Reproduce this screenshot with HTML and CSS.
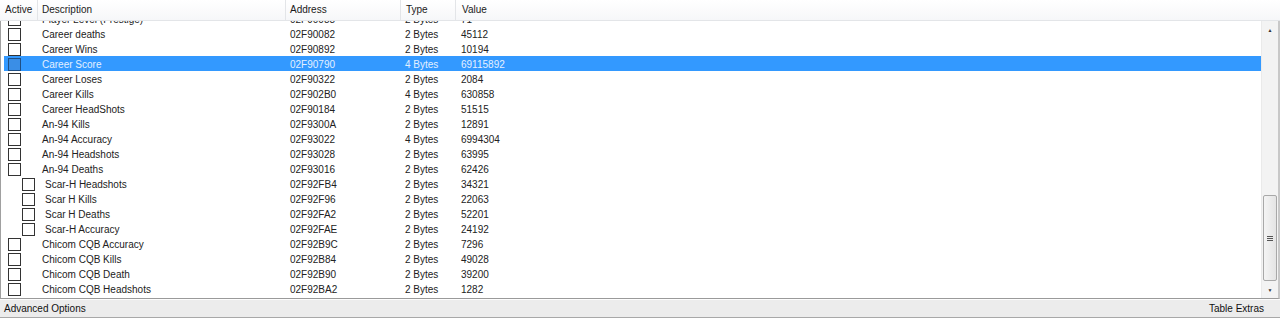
FILE: index.html
```html
<!DOCTYPE html>
<html lang="en">
<head>
    <meta charset="UTF-8">
    <title>Cheat Table</title>
    <link rel="stylesheet" href="styles.css">
</head>
<body>
    <div class="table-header">
        <div class="col col-active">Active</div>
        <div class="col col-desc">Description</div>
        <div class="col col-addr">Address</div>
        <div class="col col-type">Type</div>
        <div class="col col-value">Value</div>
    </div>

    <div class="list-frame">
        <div class="list">
            <div class="row partial"><span class="check"></span><span>Player Level (Prestige)</span><span>02F90088</span><span>2 Bytes</span><span>71</span></div>
            <div class="row"><span class="check"></span><span>Career deaths</span><span>02F90082</span><span>2 Bytes</span><span>45112</span></div>
            <div class="row"><span class="check"></span><span>Career Wins</span><span>02F90892</span><span>2 Bytes</span><span>10194</span></div>
            <div class="row selected"><span class="check"></span><span>Career Score</span><span>02F90790</span><span>4 Bytes</span><span>69115892</span></div>
            <div class="row"><span class="check"></span><span>Career Loses</span><span>02F90322</span><span>2 Bytes</span><span>2084</span></div>
            <div class="row"><span class="check"></span><span>Career Kills</span><span>02F902B0</span><span>4 Bytes</span><span>630858</span></div>
            <div class="row"><span class="check"></span><span>Career HeadShots</span><span>02F90184</span><span>2 Bytes</span><span>51515</span></div>
            <div class="row"><span class="check"></span><span>An-94 Kills</span><span>02F9300A</span><span>2 Bytes</span><span>12891</span></div>
            <div class="row"><span class="check"></span><span>An-94 Accuracy</span><span>02F93022</span><span>4 Bytes</span><span>6994304</span></div>
            <div class="row"><span class="check"></span><span>An-94 Headshots</span><span>02F93028</span><span>2 Bytes</span><span>63995</span></div>
            <div class="row"><span class="check"></span><span>An-94 Deaths</span><span>02F93016</span><span>2 Bytes</span><span>62426</span></div>
            <div class="row child"><span class="check"></span><span>Scar-H Headshots</span><span>02F92FB4</span><span>2 Bytes</span><span>34321</span></div>
            <div class="row child"><span class="check"></span><span>Scar H Kills</span><span>02F92F96</span><span>2 Bytes</span><span>22063</span></div>
            <div class="row child"><span class="check"></span><span>Scar H Deaths</span><span>02F92FA2</span><span>2 Bytes</span><span>52201</span></div>
            <div class="row child"><span class="check"></span><span>Scar-H Accuracy</span><span>02F92FAE</span><span>2 Bytes</span><span>24192</span></div>
            <div class="row"><span class="check"></span><span>Chicom CQB Accuracy</span><span>02F92B9C</span><span>2 Bytes</span><span>7296</span></div>
            <div class="row"><span class="check"></span><span>Chicom CQB Kills</span><span>02F92B84</span><span>2 Bytes</span><span>49028</span></div>
            <div class="row"><span class="check"></span><span>Chicom CQB Death</span><span>02F92B90</span><span>2 Bytes</span><span>39200</span></div>
            <div class="row"><span class="check"></span><span>Chicom CQB Headshots</span><span>02F92BA2</span><span>2 Bytes</span><span>1282</span></div>
        </div>

        <div class="scrollbar">
            <div class="arrow up">&#9650;</div>
            <div class="track">
                <div class="thumb"><span class="grip"></span></div>
            </div>
            <div class="arrow down">&#9660;</div>
        </div>
    </div>

    <div class="footer">
        <div class="footer-btn">Advanced Options</div>
        <div class="footer-btn">Table Extras</div>
    </div>
</body>
</html>
```

FILE: styles.css
```css
body {
    margin: 0;
    width: 1280px;
    height: 318px;
    overflow: hidden;
    font-family: "Liberation Sans", Arial, sans-serif;
    font-size: 10px;
    color: #222;
    background: #f0f0f0;
    display: flex;
    flex-direction: column;
}

/* header */
.table-header {
    height: 21px;
    display: flex;
    background: linear-gradient(to bottom, #ffffff, #f6f7f9);
    border-bottom: 1px solid #e3e5e8;
    box-sizing: border-box;
}

.col {
    line-height: 20px;
    padding-left: 4px;
    border-right: 1px solid #e3e5e8;
    box-sizing: border-box;
    color: #1a1a1a;
}

.col-active { width: 38px; padding-left: 5px; }
.col-desc { width: 248px; padding-left: 4px; }
.col-addr { width: 115px; padding-left: 4px; }
.col-type { width: 55px; padding-left: 5px; }
.col-value { flex: 1; padding-left: 6px; border-right: none; }

/* list */
.list-frame {
    height: 278px;
    display: flex;
    background: #fff;
    border-left: 1px solid #a0a0a0;
    border-right: 2px solid #c8c8c8;
    border-bottom: 1px solid #9a9a9a;
    box-sizing: border-box;
}

.list {
    flex: 1;
    overflow: hidden;
    padding-left: 3px;
}

.row {
    height: 15px;
    padding-top: 2px;
    box-sizing: border-box;
    display: grid;
    grid-template-columns: 38px 248px 115px 56px 1fr;
    align-items: center;
    line-height: 13px;
    white-space: nowrap;
}

.row.partial {
    margin-top: -10px;
}

.check {
    width: 11px;
    height: 11px;
    margin-left: 4px;
    border: 1px solid #333;
    background: #fff;
}

.row.child .check {
    margin-left: 18px;
}

.row.child span:nth-child(2) {
    padding-left: 3px;
}

.row.selected {
    background: #3399ff;
    color: #e4f0ff;
}

.row.selected .check {
    background: #3a8ee6;
    border-color: #1f4f85;
}

/* scrollbar */
.scrollbar {
    width: 16px;
    display: flex;
    flex-direction: column;
    background: #f3f3f3;
    border-left: 1px solid #eaeaea;
}

.arrow {
    height: 17px;
    font-size: 5px;
    color: #333;
    display: flex;
    align-items: center;
    justify-content: center;
}

.track {
    flex: 1;
    display: flex;
    flex-direction: column;
    justify-content: flex-end;
}

.thumb {
    height: 84px;
    margin: 0 1px;
    border: 1px solid #a8a8a8;
    border-radius: 2px;
    background: linear-gradient(to right, #f4f4f4, #e4e4e4);
    display: flex;
    align-items: center;
    justify-content: center;
}

.grip {
    width: 6px;
    height: 5px;
    background: repeating-linear-gradient(to bottom, #555 0, #555 1px, transparent 1px, transparent 2px);
}

/* footer */
.footer {
    flex: 1;
    display: flex;
    justify-content: space-between;
    align-items: center;
    background: #ececec;
    border-top: 1px solid #fdfdfd;
    border-bottom: 1px solid #a8a8a8;
    box-sizing: border-box;
    padding: 0 16px 0 4px;
    font-size: 10px;
    color: #111;
}
```
